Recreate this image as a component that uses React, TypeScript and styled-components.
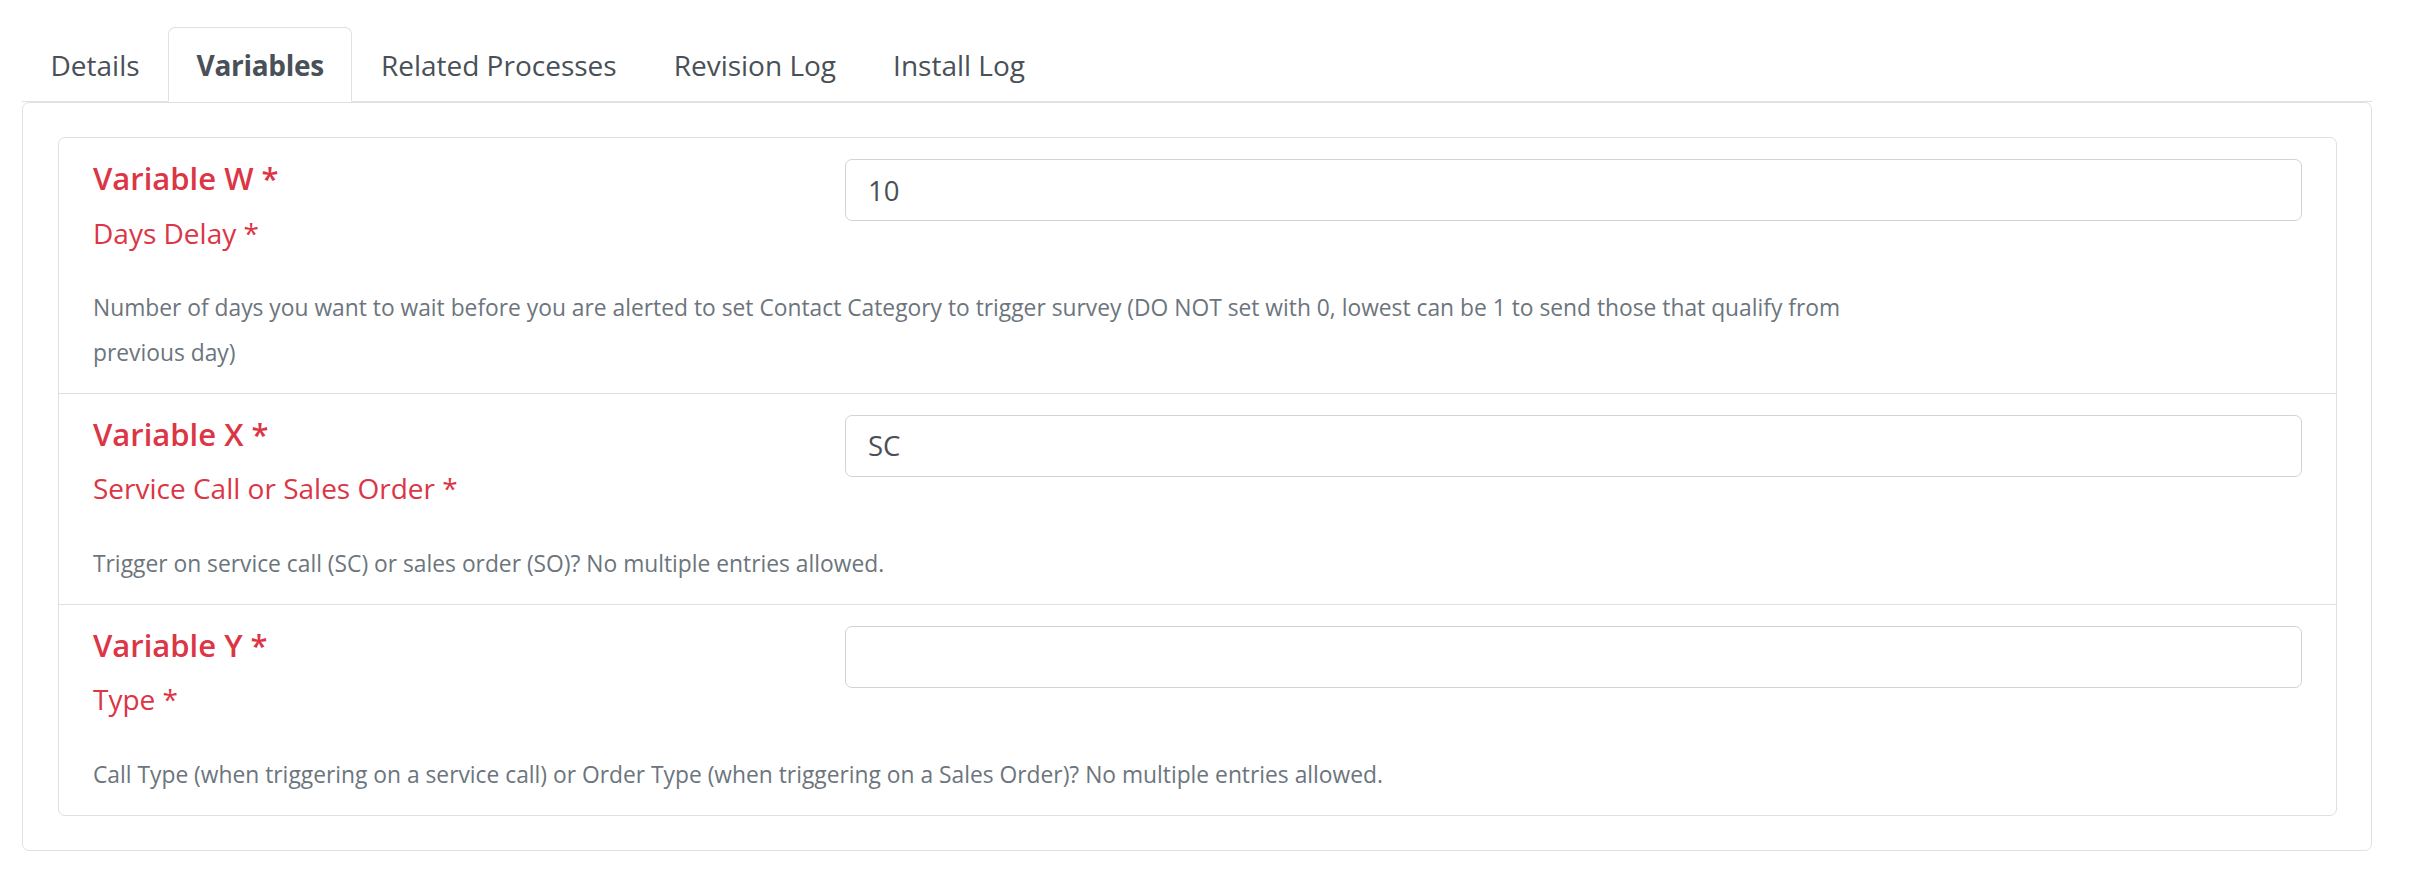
import styled, { createGlobalStyle } from 'styled-components';

const GlobalStyle = createGlobalStyle`
  body {
    margin: 0;
    background: #fff;
    font-family: "Open Sans", "Noto Sans", Arial, sans-serif;
    color: #495057;
  }
  * {
    box-sizing: border-box;
  }
`;

const Page = styled.div`
  padding: 27px 39px 40px 22px;
`;

const TabList = styled.ul`
  display: flex;
  list-style: none;
  margin: 0;
  padding: 0;
  border-bottom: 1px solid #dee2e6;
`;

const Tab = styled.li<{ active?: boolean }>`
  margin-bottom: -1px;
  padding: 16px 27.5px 14px;
  font-size: 28px;
  line-height: 43px;
  font-weight: ${(p) => (p.active ? 700 : 400)};
  letter-spacing: ${(p) => (p.active ? '-0.3px' : 'normal')};
  color: #495057;
  background: ${(p) => (p.active ? '#fff' : 'transparent')};
  border: 1px solid transparent;
  border-color: ${(p) => (p.active ? '#dee2e6 #dee2e6 #fff' : 'transparent')};
  border-top-left-radius: 7px;
  border-top-right-radius: 7px;
  cursor: pointer;
`;

const TabPanel = styled.div`
  border: 1px solid #dee2e6;
  border-radius: 7px;
  padding: 34px 34px 34px 35px;
`;

const VariableList = styled.div`
  border: 1px solid #dfdfdf;
  border-radius: 7px;
`;

const VariableRow = styled.div`
  padding: 21px 34px 18px 34px;
  border-bottom: 1px solid #dfdfdf;

  &:last-child {
    border-bottom: 0;
  }
`;

const FieldGrid = styled.div`
  display: grid;
  grid-template-columns: 728px 1fr;
  column-gap: 24px;
  align-items: start;
`;

const Labels = styled.div`
  display: flex;
  flex-direction: column;
  gap: 14px;
`;

const VarName = styled.h5`
  margin: 0;
  font-size: 31px;
  line-height: 39.6px;
  font-weight: 600;
  color: #dc3545;
`;

const VarTitle = styled.label`
  font-size: 28px;
  line-height: 41.25px;
  color: #dc3545;
`;

const ValueInput = styled.input`
  width: 100%;
  height: 62px;
  padding: 0 22px;
  font-family: inherit;
  font-size: 27.5px;
  color: #495057;
  background: #fff;
  border: 1px solid #ced4da;
  border-radius: 7px;
  outline: none;
`;

const Description = styled.p`
  margin: 31px 0 0;
  max-width: 1790px;
  font-size: 22.8px;
  line-height: 45px;
  color: #6c757d;
`;

interface Variable {
  name: string;
  title: string;
  value: string;
  help: string;
}

const variables: Variable[] = [
  {
    name: 'Variable W *',
    title: 'Days Delay *',
    value: '10',
    help:
      'Number of days you want to wait before you are alerted to set Contact Category to trigger survey (DO NOT set with 0, lowest can be 1 to send those that qualify from previous day)',
  },
  {
    name: 'Variable X *',
    title: 'Service Call or Sales Order *',
    value: 'SC',
    help: 'Trigger on service call (SC) or sales order (SO)? No multiple entries allowed.',
  },
  {
    name: 'Variable Y *',
    title: 'Type *',
    value: '',
    help:
      'Call Type (when triggering on a service call) or Order Type (when triggering on a Sales Order)? No multiple entries allowed.',
  },
];

const tabs = ['Details', 'Variables', 'Related Processes', 'Revision Log', 'Install Log'];

export default function App() {
  return (
    <>
      <GlobalStyle />
      <Page>
        <TabList>
          {tabs.map((t) => (
            <Tab key={t} active={t === 'Variables'}>
              {t}
            </Tab>
          ))}
        </TabList>
        <TabPanel>
          <VariableList>
            {variables.map((v) => (
              <VariableRow key={v.name}>
                <FieldGrid>
                  <Labels>
                    <VarName>{v.name}</VarName>
                    <VarTitle>{v.title}</VarTitle>
                  </Labels>
                  <ValueInput defaultValue={v.value} />
                </FieldGrid>
                <Description>{v.help}</Description>
              </VariableRow>
            ))}
          </VariableList>
        </TabPanel>
      </Page>
    </>
  );
}
